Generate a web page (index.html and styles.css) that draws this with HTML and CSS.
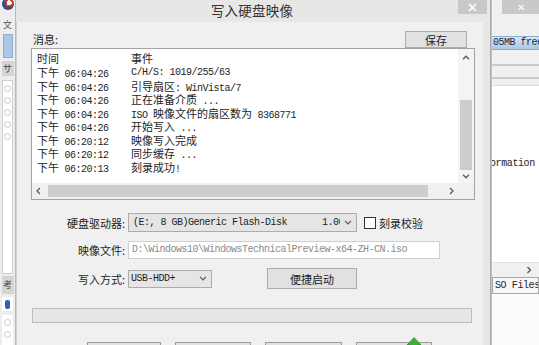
FILE: index.html
```html
<!DOCTYPE html>
<html lang="zh-CN">
<head>
<meta charset="utf-8">
<title>写入硬盘映像</title>
<link rel="stylesheet" href="styles.css">
</head>
<body>
<div class="desk">
  <div class="bg-left">
    <div class="bl-icon"></div>
    <div class="bl-char">文</div>
    <div class="bl-blue"></div>
    <div class="bl-gray">サ</div>
    <div class="bl-white">
      <span class="bl-dot"></span><span class="bl-dot"></span><span class="bl-dot"></span><span class="bl-dot"></span><span class="bl-dot"></span>
    </div>
    <div class="bl-gray bl-gray2">考</div>
    <div class="bl-white2"><span class="bl-bluei"></span></div>
    <div class="bl-white3"><span class="bl-dot"></span><span class="bl-dot"></span></div>
  </div>

  <div class="bg-right">
    <div class="br-title"><div class="br-close">&#x2715;</div></div>
    <div class="br-blue">05MB free</div>
    <div class="br-line"></div>
    <div class="br-line br-line2"></div>
    <div class="br-white"><span class="br-text">ormation</span></div>
    <div class="br-scroll"><svg width="6" height="8" viewBox="0 0 6 8"><path d="M1.5 1 L4.5 4 L1.5 7" fill="none" stroke="#555" stroke-width="1.3"/></svg></div>
    <div class="br-iso">SO Files</div>
    <div class="br-rest"></div>
  </div>

  <div class="dialog">
    <div class="titlebar">
      <span class="title">写入硬盘映像</span>
      <div class="close"><svg width="9" height="9" viewBox="0 0 9 9"><path d="M1 1 L8 8 M8 1 L1 8" stroke="#fff" stroke-width="1.6"/></svg></div>
    </div>
    <div class="client">
      <div class="toprow">
        <span class="lbl-msg">消息:</span>
        <div class="btn btn-save">保存</div>
      </div>
      <div class="list">
        <div class="list-body">
          <div class="list-head"><span class="col-time">时间</span><span>事件</span></div>
          <div class="list-rows">
            <div class="row"><span class="col-time"><span class="c">下午</span> 06:04:26</span><span>C/H/S: 1019/255/63</span></div>
            <div class="row"><span class="col-time"><span class="c">下午</span> 06:04:26</span><span><span class="c">引导扇区</span>: WinVista/7</span></div>
            <div class="row"><span class="col-time"><span class="c">下午</span> 06:04:26</span><span><span class="c">正在准备介质</span> ...</span></div>
            <div class="row"><span class="col-time"><span class="c">下午</span> 06:04:26</span><span>ISO <span class="c">映像文件的扇区数为</span> 8368771</span></div>
            <div class="row"><span class="col-time"><span class="c">下午</span> 06:04:26</span><span><span class="c">开始写入</span> ...</span></div>
            <div class="row"><span class="col-time"><span class="c">下午</span> 06:20:12</span><span><span class="c">映像写入完成</span></span></div>
            <div class="row"><span class="col-time"><span class="c">下午</span> 06:20:12</span><span><span class="c">同步缓存</span> ...</span></div>
            <div class="row"><span class="col-time"><span class="c">下午</span> 06:20:13</span><span><span class="c">刻录成功</span>!</span></div>
          </div>
        </div>
        <div class="vscroll">
          <div class="sarrow sarrow-up"><svg width="8" height="5" viewBox="0 0 8 5"><path d="M1 4.2 L4 1.2 L7 4.2" fill="none" stroke="#5a5a5a" stroke-width="1.3"/></svg></div>
          <div class="vgap"></div>
          <div class="vthumb"></div>
          <div class="sarrow sarrow-down"><svg width="8" height="5" viewBox="0 0 8 5"><path d="M1 0.8 L4 3.8 L7 0.8" fill="none" stroke="#5a5a5a" stroke-width="1.3"/></svg></div>
        </div>
        <div class="hscroll">
          <div class="harrow harrow-left"><svg width="5" height="8" viewBox="0 0 5 8"><path d="M4 1 L1 4 L4 7" fill="none" stroke="#5a5a5a" stroke-width="1.3"/></svg></div>
          <div class="hthumb"></div>
          <div class="hgap"></div>
          <div class="harrow harrow-right"><svg width="5" height="8" viewBox="0 0 5 8"><path d="M1 1 L4 4 L1 7" fill="none" stroke="#5a5a5a" stroke-width="1.3"/></svg></div>
        </div>
        <div class="corner"></div>
      </div>

      <div class="form">
        <div class="frow r1">
          <span class="flabel">硬盘驱动器:</span>
          <div class="combo combo-drive">
            <span class="ctext">(E:, 8 GB)Generic Flash-Disk</span><span class="crev">1.00</span>
            <span class="chev"><svg width="8" height="5" viewBox="0 0 8 5"><path d="M1 0.8 L4 3.8 L7 0.8" fill="none" stroke="#555" stroke-width="1.2"/></svg></span>
          </div>
          <span class="check"></span>
          <span class="check-label">刻录校验</span>
        </div>
        <div class="frow r2">
          <span class="flabel">映像文件:</span>
          <div class="input">D:\Windows10\WindowsTechnicalPreview-x64-ZH-CN.iso</div>
        </div>
        <div class="frow r3">
          <span class="flabel">写入方式:</span>
          <div class="combo combo-mode">
            <span class="ctext">USB-HDD+</span>
            <span class="chev"><svg width="8" height="5" viewBox="0 0 8 5"><path d="M1 0.8 L4 3.8 L7 0.8" fill="none" stroke="#555" stroke-width="1.2"/></svg></span>
          </div>
          <div class="btn btn-quick">便捷启动</div>
        </div>
      </div>

      <div class="progress"></div>

      <div class="actions">
        <div class="btn abtn a1">格式化</div>
        <div class="btn abtn a2">写入</div>
        <div class="btn abtn a3">终止[A]</div>
        <div class="btn abtn a4">返回</div>
      </div>
    </div>
  </div>

  <svg class="cursor" width="16" height="10" viewBox="0 0 16 10"><path d="M8 0.5 L15 8 L11 8 L11 10 L5 10 L5 8 L1 8 Z" fill="#3fae3a" stroke="#2a8a2a" stroke-width="0.8"/></svg>
</div>
</body>
</html>
```

FILE: styles.css
```css
* { box-sizing: border-box; }
html, body { margin: 0; padding: 0; }
body {
  width: 539px;
  height: 345px;
  overflow: hidden;
  background: #f0f0f0;
  font-family: "Noto Sans CJK SC", "Noto Sans", sans-serif;
  font-size: 11px;
  color: #1e1e1e;
}
.desk { position: relative; width: 539px; height: 345px; overflow: hidden; }

/* ---------- background window, left strip ---------- */
.bg-left {
  position: absolute; left: 0; top: 0;
  width: 16px; height: 345px;
  background: #ededed;
  border-right: 1px solid #b9b9b9;
  display: flex; flex-direction: column; align-items: center;
}
.bl-icon {
  width: 12px; height: 12px; margin-top: -2px; border-radius: 50%;
  background: radial-gradient(circle at 60% 40%, #f4f4f4 0 25%, #c0392b 26% 45%, #2c4f8a 46%);
}
.bl-char { margin-top: 8px; height: 14px; font-size: 9px; line-height: 14px; color: #555; overflow: hidden; }
.bl-blue { margin-top: 2px; width: 10px; height: 24px; background: #a9c8e6; border: 1px solid #8fb0d2; }
.bl-gray { margin-top: 3px; width: 12px; height: 15px; background: #d4d4d4; font-size: 9px; line-height: 15px; text-align: center; color: #444; overflow: hidden; }
.bl-white {
  margin-top: 4px; width: 11px; height: 194px; background: #fff; border: 1px solid #cfcfcf;
  display: flex; flex-direction: column; align-items: center; gap: 5px; padding-top: 4px;
}
.bl-dot { width: 7px; height: 7px; border-radius: 50%; border: 1px solid #c9c9c9; flex: none; }
.bl-gray2 { margin-top: 2px; height: 18px; line-height: 18px; }
.bl-white2 { margin-top: 3px; width: 11px; height: 14px; background: #fff; display: flex; justify-content: center; align-items: center; }
.bl-bluei { width: 5px; height: 9px; background: #3060b0; border-radius: 2px; }
.bl-white3 { margin-top: 4px; width: 11px; flex: 1; background: #fff; display: flex; flex-direction: column; align-items: center; gap: 5px; padding-top: 4px; }

/* ---------- background window, right strip ---------- */
.bg-right {
  position: absolute; left: 491px; top: 0;
  width: 48px; height: 345px;
  background: #f0f0f0;
  border-left: 1px solid #c4c4c4;
  display: flex; flex-direction: column;
}
.br-title { height: 36px; padding-left: 10px; flex: none; }
.br-close {
  height: 14px; background: #c9c9c9; color: #fff;
  font-size: 10px; line-height: 13px; text-align: center;
}
.br-blue {
  height: 14px; flex: none;
  background: linear-gradient(#d7e7f5, #a9c8e6);
  border-top: 1px solid #8aaed0; border-bottom: 1px solid #8aaed0;
  font-family: "Liberation Mono", monospace; font-size: 10px; letter-spacing: -0.5px;
  line-height: 12px; color: #1d2c3c; white-space: pre; overflow: hidden; padding-left: 1px;
}
.br-line { margin-top: 14px; height: 2px; background: #cacaca; flex: none; }
.br-line2 { margin-top: 11px; }
.br-white {
  margin-top: 6px; height: 177px; flex: none; background: #fff; border-top: 1px solid #dcdcdc;
  padding-top: 71px; overflow: hidden; white-space: pre;
}
.br-text {
  display: block; margin-left: -2px;
  font-family: "Liberation Mono", monospace; font-size: 10px; letter-spacing: -0.4px; line-height: 13px; color: #222;
}
.br-scroll {
  height: 15px; flex: none; background: #f0f0f0; border-top: 1px solid #e2e2e2;
  display: flex; align-items: center; justify-content: flex-end; padding-right: 7px;
}
.br-iso {
  height: 17px; flex: none; border: 1px solid #a8a8a8; background: #f7f7f7;
  font-family: "Liberation Mono", monospace; font-size: 10px; letter-spacing: -0.4px;
  line-height: 15px; padding-left: 2px; white-space: pre; overflow: hidden; color: #222;
}
.br-rest { flex: 1; background: #fbfbfb; }

/* ---------- dialog ---------- */
.dialog {
  position: absolute; left: 16px; top: 0;
  width: 475px; height: 372px;
  background: #e7e7e7;
  border-right: 1px solid #a7a7a7;
  display: flex; flex-direction: column;
}
.titlebar {
  height: 22px; flex: none; position: relative;
  display: flex; justify-content: center; align-items: center;
  padding-bottom: 3px; padding-right: 2px;
}
.title { font-size: 13.5px; color: #333; letter-spacing: 0.2px; }
.close {
  position: absolute; right: 3px; top: 0;
  width: 29px; height: 14px; background: #c8c8c8;
  display: flex; align-items: center; justify-content: center;
}
.client {
  flex: 1; margin-right: 7px;
  background: #f0f0f0;
  border-left: 1px solid #cfcfcf;
  padding: 8px 8px 0 14px;
}

.toprow { display: flex; justify-content: space-between; align-items: flex-end; height: 18px; }
.lbl-msg { margin-left: 2px; line-height: 14px; padding-bottom: 2px; }

.btn {
  background: #e1e1e1; border: 1px solid #adadad;
  display: flex; align-items: center; justify-content: center;
  color: #222; font-size: 11px;
}
.btn-save { width: 62px; height: 17px; margin-right: 8px; }

/* list */
.list {
  height: 152px; border: 1px solid #a3a3a3; background: #fff;
  display: grid; grid-template-columns: 1fr 16px; grid-template-rows: 1fr 16px;
}
.list-body { padding: 2px 0 0 5px; overflow: hidden; }
.list-head { display: flex; height: 14px; line-height: 14px; }
.list-rows { margin-top: 1px; }
.row {
  display: flex; height: 13.5px; line-height: 13.5px; white-space: pre;
  font-family: "Liberation Mono", "Noto Sans CJK SC", monospace; font-size: 10px; letter-spacing: -0.5px;
}
.c { font-family: "Noto Sans CJK SC", sans-serif; font-size: 11px; letter-spacing: 0; }
.col-time { width: 94px; flex: none; }

.vscroll { background: #f4f4f4; display: flex; flex-direction: column; align-items: center; }
.sarrow { width: 100%; display: flex; align-items: center; justify-content: center; }
.sarrow-up { height: 16px; }
.vgap { height: 35px; }
.vthumb { width: 12px; height: 70px; background: #cdcdcd; }
.sarrow-down { flex: 1; }

.hscroll { background: #f0f0f0; display: flex; align-items: center; }
.harrow { height: 100%; display: flex; align-items: center; justify-content: center; }
.harrow-left { width: 16px; padding-right: 4px; }
.hthumb { width: 380px; height: 12px; background: #cdcdcd; }
.hgap { width: 16px; }
.harrow-right { flex: 1; }
.corner { background: #f0f0f0; }

/* form */
.form { margin-top: 13px; display: flex; flex-direction: column; }
.frow { display: flex; align-items: center; }
.flabel { width: 94px; margin-right: 3px; text-align: right; flex: none; }
.r1 { height: 19px; }
.r2 { height: 18px; margin-top: 9px; }
.r3 { height: 21px; margin-top: 9px; }

.combo {
  background: #e5e5e5; border: 1px solid #acacac;
  display: flex; align-items: center; padding-left: 4px; overflow: hidden;
  font-family: "Liberation Mono", monospace; font-size: 10px; letter-spacing: -0.5px; white-space: pre;
}
.combo-drive { width: 229px; height: 19px; }
.combo-mode { width: 84px; height: 18px; padding-left: 2px; }
.ctext { flex: none; }
.combo-mode .ctext { flex: 1; }
.crev { margin-left: 35px; width: 18px; overflow: hidden; flex: none; }
.chev { width: 16px; margin-left: auto; flex: none; display: flex; justify-content: center; }
.combo-drive .chev { margin-left: 0; }
.check { width: 12px; height: 12px; border: 1px solid #333; background: #fff; margin-left: 7px; flex: none; }
.check-label { margin-left: 3px; }

.input {
  width: 312px; height: 18px; background: #fff; border: 1px solid #d0d0d0;
  padding-left: 3px; color: #8a8a8a; white-space: pre; overflow: hidden;
  font-family: "Liberation Mono", monospace; font-size: 10px; letter-spacing: -0.5px; line-height: 16px;
}
.btn-quick { width: 90px; height: 21px; margin-left: 55px; }

.progress {
  margin-top: 19px; margin-left: 1px;
  width: 440px; height: 15px; background: #e6e6e6; border: 1px solid #bcbcbc;
}

.actions { margin-top: 19px; display: flex; gap: 14px; padding-left: 56px; }
.abtn { height: 22px; align-items: flex-start; padding-top: 1px; border-color: #9a9a9a; }
.a1 { width: 74px; }
.a2 { width: 76px; }
.a3 { width: 77px; }
.a4 { width: 76px; }

.cursor { position: absolute; left: 406px; top: 337px; }
```
